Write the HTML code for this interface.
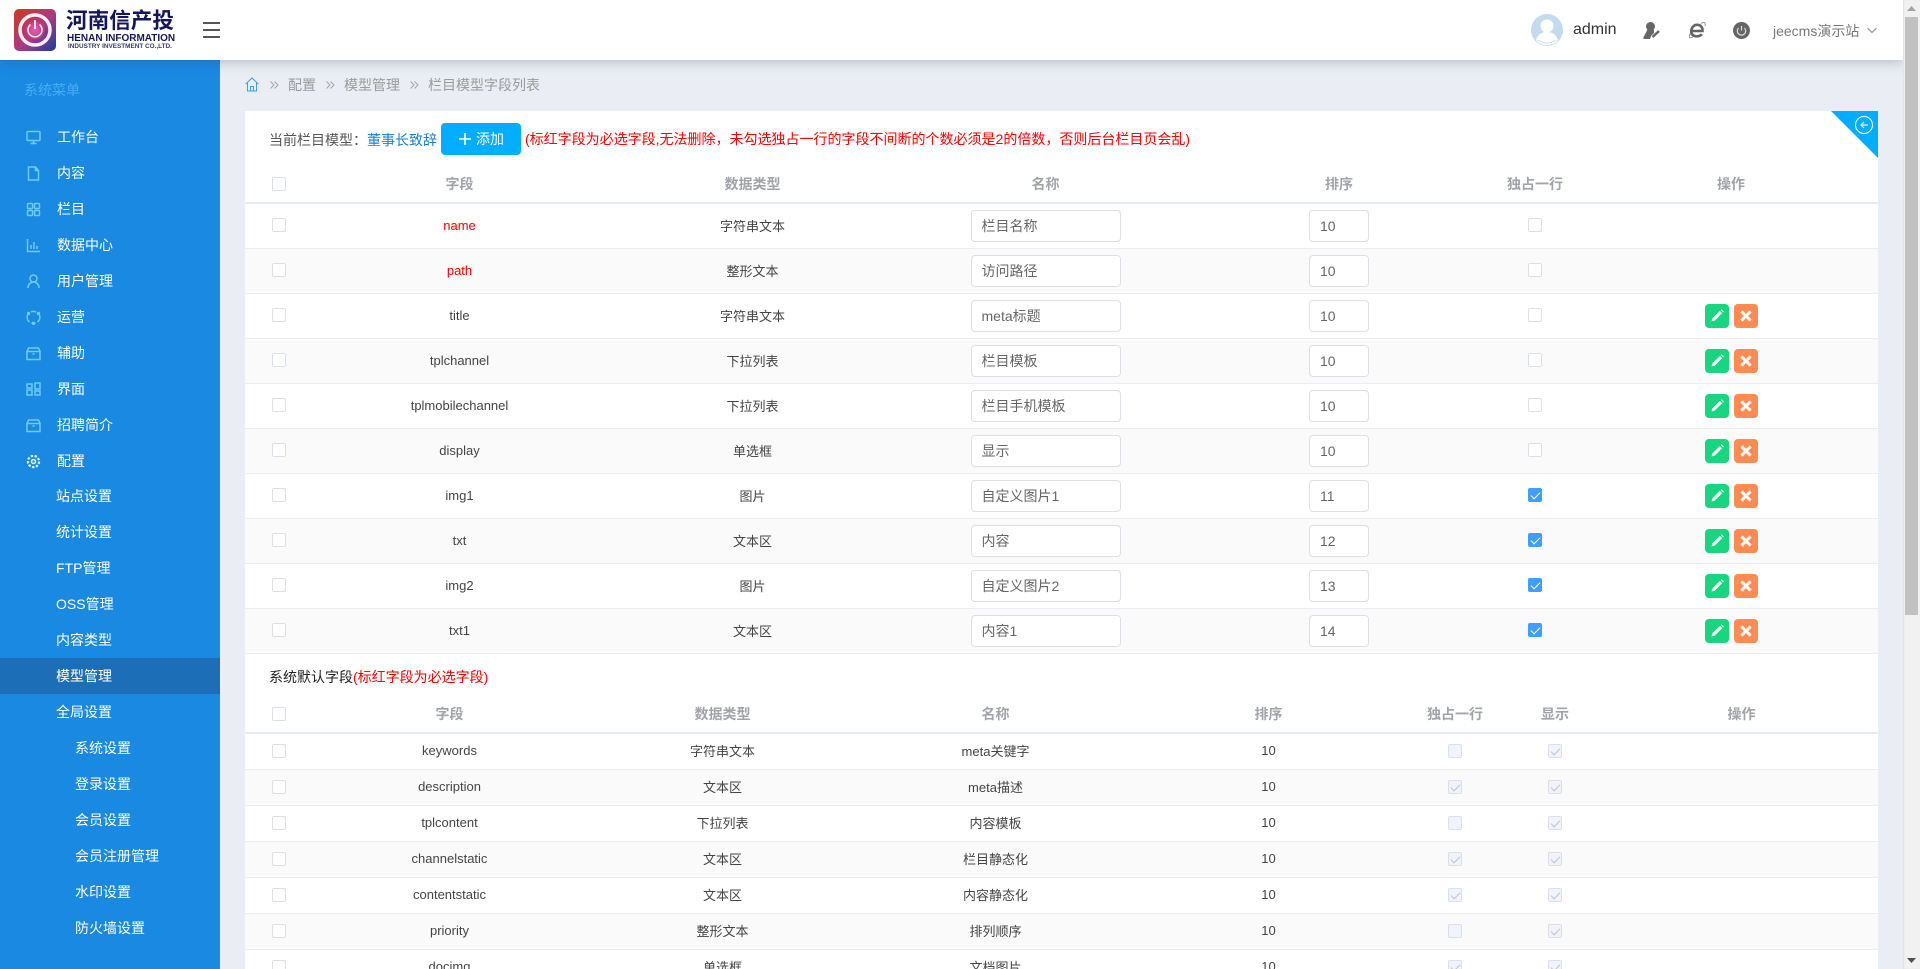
<!DOCTYPE html>
<html lang="zh-CN"><head><meta charset="utf-8"><title>栏目模型字段列表</title>
<style>
*{box-sizing:border-box}
html,body{margin:0;padding:0;width:1920px;height:969px;overflow:hidden;background:#eaedf3}
#wrap{position:relative;width:1920px;height:969px;overflow:hidden;background:#eaedf3;font-family:"Liberation Sans","Noto Sans CJK SC",sans-serif;color:#444}
.abs{position:absolute}
#top{position:absolute;left:0;top:0;width:1903px;height:60px;background:#fff;box-shadow:0 2px 11px rgba(60,70,90,.3);z-index:5}
#side{position:absolute;left:0;top:60px;width:220px;height:909px;background:#1989e2;z-index:4}
#side .it{position:absolute;left:0;width:220px;height:36px;line-height:36px;color:#fff;font-size:14px}
#side .it svg{position:absolute;left:26px;top:11px;width:15px;height:15px;fill:none;stroke:#6fcbfa;stroke-width:1.5}
#card{position:absolute;left:245px;top:111px;width:1633px;height:858px;background:#fff}
table{position:absolute;left:245px;border-collapse:separate;border-spacing:0;table-layout:fixed;font-size:13px;color:#444}
th{height:38px;font-size:14px;font-weight:700;color:#a0a3a8;text-align:center;padding:0;border-bottom:2px solid #e8ebf5}
td{padding:0 0 2px;text-align:center;border-bottom:1px solid #ebedf3;position:relative}
#t1 td{height:45px}#t2 td{height:36px}
tr.e td{background:#fafafa}
.c{display:inline-block;width:14px;height:14px;border:1px solid #dcdfe6;border-radius:2px;background:#fff;vertical-align:middle;position:relative;margin-top:-2px}
.c.on{background:#409eff;border-color:#409eff}
.c.on:after,.c.d:after{content:"";position:absolute;left:4px;top:1px;width:4px;height:8px;border:solid #fff;border-width:0 1px 1px 0;transform:rotate(45deg)}
.c.g{background:#f0f3fb}
.c.d{background:#f0f3fb}
.c.d:after{border-color:#bfc3cc}
.i{display:inline-block;height:32px;line-height:30px;border:1px solid #dcdfe6;border-radius:4px;background:#fff;color:#666;font-size:14px;text-align:left;padding-left:10px;vertical-align:middle;position:relative;top:1px}
.n{width:150px}.s{width:60px}
.b{display:inline-block;width:24px;height:24px;border-radius:4px;vertical-align:middle;position:relative;top:1px}
.b svg{position:absolute;left:4px;top:4px;width:16px;height:16px}
.gr{background:#18d67f;margin-right:5px}.or{background:#ff8a52}
.r{color:#f00}
.bc{position:absolute;top:76px;font-size:14px;line-height:18px;color:#9a9a9a;z-index:1}
.ch{position:absolute;top:81px;z-index:1}
</style></head><body><div id="wrap">

<div id="top">
<svg class="abs" style="left:14px;top:9px" width="42" height="42" viewBox="0 0 42 42"><defs><linearGradient id="lg" x1="0" y1="0" x2="1" y2="1"><stop offset="0" stop-color="#d03a18"/><stop offset=".55" stop-color="#a53a8a"/><stop offset="1" stop-color="#143f9e"/></linearGradient><radialGradient id="rg"><stop offset="0" stop-color="#e060c0"/><stop offset="1" stop-color="#c23a70"/></radialGradient></defs><rect width="42" height="42" rx="5" fill="url(#lg)"/><circle cx="21" cy="21" r="15" fill="none" stroke="#fbeef0" stroke-width="3.500"/><circle cx="21" cy="21" r="9.500" fill="url(#rg)"/><path d="M16.500 15.500a7 7 0 1 0 9 0" fill="none" stroke="#f8e8f0" stroke-width="1.500"/><rect x="20.200" y="11" width="1.600" height="9" fill="#fff"/></svg>
<div class="abs" style="left:66px;top:8px;font-size:21.6px;line-height:26px;font-weight:700;color:#15155c;white-space:nowrap">河南信产投</div>
<div class="abs" style="left:67px;top:33px;font-size:10px;line-height:11px;font-weight:700;color:#15155c;white-space:nowrap">HENAN INFORMATION</div>
<div class="abs" style="left:68px;top:43px;font-size:6.4px;line-height:8px;font-weight:700;color:#3a3a70;white-space:nowrap">INDUSTRY INVESTMENT CO.,LTD.</div>
<div class="abs" style="left:203px;top:22px;width:17px;height:2px;background:#555"></div>
<div class="abs" style="left:203px;top:29px;width:17px;height:2px;background:#555"></div>
<div class="abs" style="left:203px;top:36px;width:17px;height:2px;background:#555"></div>

<svg class="abs" style="left:1531px;top:14px" width="32" height="32" viewBox="0 0 32 32"><circle cx="16" cy="16" r="16" fill="#c3daef"/><circle cx="16" cy="12" r="6.500" fill="#fff"/><path d="M5 26c2-6 6-8 11-8s9 2 11 8c-3 4-7 5-11 5s-8-1-11-5z" fill="#fff"/><path d="M7 26c3 2 6 3 9 3s6-1 9-3" stroke="#c3daef" fill="none"/></svg>
<div class="abs" style="left:1573px;top:20px;font-size:16px;line-height:20px;color:#333">admin</div>
<svg class="abs" style="left:1642px;top:21px" width="20" height="19" viewBox="0 0 20 19"><circle cx="8.500" cy="5.500" r="4.500" fill="#666"/><path d="M5 9h7v3l-3 3-1 3H1.500C1 15 4 13 5 9z" fill="#666"/><path d="M10.500 16l6.500-6" stroke="#666" stroke-width="2.500"/></svg>
<svg class="abs" style="left:1688px;top:21px" width="18" height="18" viewBox="0 0 18 18"><path d="M3.800 10h10.700c.2-4-2-6.200-5.300-6.200S3.300 6.500 3.300 10.300s2.500 5 5.500 5c2.200 0 4-.8 5-2.200" fill="none" stroke="#666" stroke-width="2.600"/><path d="M2.500 12C.5 16 1 18 5 16M13 2.500c3-2 5-1.500 4 2.500" fill="none" stroke="#888" stroke-width=".9"/></svg>
<svg class="abs" style="left:1733px;top:22px" width="17" height="17" viewBox="0 0 17 17"><circle cx="8.500" cy="8.500" r="8.500" fill="#666"/><path d="M5.500 6a4.200 4.200 0 1 0 6 0" fill="none" stroke="#ddd" stroke-width="1.200"/><path d="M8.500 4v4.500" stroke="#ddd" stroke-width="1.200"/></svg>
<div class="abs" style="left:1773px;top:22px;font-size:14px;line-height:18px;color:#777;white-space:nowrap">jeecms演示站</div>
<svg class="abs" style="left:1867px;top:27px" width="10" height="7" viewBox="0 0 10 7"><path d="M.5 1L5 5.500 9.500 1" fill="none" stroke="#888"/></svg>
</div>

<div id="side">
<div class="abs" style="left:24px;top:21px;font-size:14px;line-height:18px;color:#48aef2">系统菜单</div>
<div class="it" style="top:59px;padding-left:57px"><svg viewBox="0 0 15 15"><rect x="1" y="1.500" width="13" height="9" rx="1"/><path d="M7.500 10.500v3M4.500 13.500h6"/></svg>工作台</div>
<div class="it" style="top:95px;padding-left:57px"><svg viewBox="0 0 15 15"><path d="M2.500 1h7l3 3.500V14h-10zM9.500 1v3.500h3"/></svg>内容</div>
<div class="it" style="top:131px;padding-left:57px"><svg viewBox="0 0 15 15"><rect x="1.500" y="1.500" width="5" height="5" rx=".8"/><rect x="8.500" y="1.500" width="5" height="5" rx=".8"/><rect x="1.500" y="8.500" width="5" height="5" rx=".8"/><rect x="8.500" y="8.500" width="5" height="5" rx=".8"/></svg>栏目</div>
<div class="it" style="top:167px;padding-left:57px"><svg viewBox="0 0 15 15"><path d="M1.500 1v12.500H14M5 11V7M8 11V4M11 11V8"/></svg>数据中心</div>
<div class="it" style="top:203px;padding-left:57px"><svg viewBox="0 0 15 15"><circle cx="7.500" cy="4.500" r="3.500"/><path d="M2 14c0-3.500 2.500-6 5.500-6s5.500 2.500 5.500 6"/></svg>用户管理</div>
<div class="it" style="top:239px;padding-left:57px"><svg viewBox="0 0 15 15"><path d="M3.500 2.500a6 6 0 0 0 0 9.500M11.500 2.500a6 6 0 0 1 0 9.500M5 2c1.500-.7 3.500-.7 5 0M5.500 13c1.200.4 2.800.4 4 0"/><circle cx="7.500" cy="13.300" r="1" fill="#6fcbfa"/><circle cx="12.500" cy="3.500" r="1" fill="#6fcbfa"/><circle cx="2.500" cy="3.500" r="1" fill="#6fcbfa"/></svg>运营</div>
<div class="it" style="top:275px;padding-left:57px"><svg viewBox="0 0 15 15"><path d="M1 5.500h13v8H1zM2.500 2h10L14 5.500H1zM6.500 8h2"/></svg>辅助</div>
<div class="it" style="top:311px;padding-left:57px"><svg viewBox="0 0 15 15"><rect x="1" y="2" width="5" height="4"/><rect x="9" y="1" width="5" height="6"/><rect x="1" y="8" width="5" height="5"/><rect x="9" y="9" width="5" height="4"/></svg>界面</div>
<div class="it" style="top:347px;padding-left:57px"><svg viewBox="0 0 15 15"><path d="M1 5.500h13v8H1zM2.500 2h10L14 5.500H1zM6.500 8h2"/></svg>招聘简介</div>
<div class="it" style="top:383px;padding-left:57px"><svg viewBox="0 0 15 15" style="stroke:#e4f5ff"><circle cx="7.500" cy="7.500" r="2"/><circle cx="7.500" cy="7.500" r="5.600" stroke-width="2.200" stroke-dasharray="2.400 1.500"/></svg>配置</div>
<div class="it" style="top:418px;padding-left:56px">站点设置</div>
<div class="it" style="top:454px;padding-left:56px">统计设置</div>
<div class="it" style="top:490px;padding-left:56px">FTP管理</div>
<div class="it" style="top:526px;padding-left:56px">OSS管理</div>
<div class="it" style="top:562px;padding-left:56px">内容类型</div>
<div class="it" style="top:598px;padding-left:56px;background:#1c6fb6">模型管理</div>
<div class="it" style="top:634px;padding-left:56px">全局设置</div>
<div class="it" style="top:670px;padding-left:75px">系统设置</div>
<div class="it" style="top:706px;padding-left:75px">登录设置</div>
<div class="it" style="top:742px;padding-left:75px">会员设置</div>
<div class="it" style="top:778px;padding-left:75px">会员注册管理</div>
<div class="it" style="top:814px;padding-left:75px">水印设置</div>
<div class="it" style="top:850px;padding-left:75px">防火墙设置</div>
</div>

<svg class="abs" style="left:245px;top:77px;z-index:1" width="14" height="15" viewBox="0 0 14 15"><path d="M.7 7L7 1l6.300 6M2.500 6v8h9V6M5.500 14V9.500h3V14" fill="none" stroke="#3a9fe6" stroke-width="1"/></svg>
<svg class="ch" style="left:270px" width="9" height="8" viewBox="0 0 9 8"><path d="M.5.500L4 4 .5 7.500M4.500.500L8 4 4.500 7.500" fill="none" stroke="#a5a5a5"/></svg><div class="bc" style="left:288px">配置</div>
<svg class="ch" style="left:326px" width="9" height="8" viewBox="0 0 9 8"><path d="M.5.500L4 4 .5 7.500M4.500.500L8 4 4.500 7.500" fill="none" stroke="#a5a5a5"/></svg><div class="bc" style="left:344px">模型管理</div>
<svg class="ch" style="left:410px" width="9" height="8" viewBox="0 0 9 8"><path d="M.5.500L4 4 .5 7.500M4.500.500L8 4 4.500 7.500" fill="none" stroke="#a5a5a5"/></svg><div class="bc" style="left:428px">栏目模型字段列表</div>

<div id="card"></div>
<div class="abs" style="left:269px;top:131px;font-size:14px;line-height:18px;color:#555">当前栏目模型：</div>
<div class="abs" style="left:367px;top:131px;font-size:14px;line-height:18px;color:#1a7fd0">董事长致辞</div>
<div class="abs" style="left:441px;top:123px;width:80px;height:32px;background:#00aeff;border-radius:4px;color:#fff;font-size:14px;line-height:32px;padding-left:35px">添加
<svg class="abs" style="left:17px;top:9px" width="14" height="14" viewBox="0 0 14 14"><path d="M7 1v12M1 7h12" stroke="#fff" stroke-width="1.600"/></svg></div>
<div class="abs r" style="left:525px;top:130px;font-size:14px;line-height:18px;white-space:nowrap">(标红字段为必选字段,无法删除，未勾选独占一行的字段不间断的个数必须是2的倍数，否则后台栏目页会乱)</div>
<svg class="abs" style="left:1831px;top:111px" width="47" height="47" viewBox="0 0 47 47"><path d="M0 0h47v47z" fill="#00aeff"/><circle cx="33" cy="14" r="8.500" fill="none" stroke="#fff" stroke-width="1.100"/><path d="M37 14h-7.500M33 11l-3 3 3 3" fill="none" stroke="#d6f1ff" stroke-width="1.300"/></svg>

<table id="t1" style="top:166px;width:1633px">
<colgroup><col style="width:68px"><col style="width:293px"><col style="width:293px"><col style="width:293px"><col style="width:294px"><col style="width:98px"><col style="width:294px"></colgroup>
<thead><tr><th><span class="c"></span></th><th>字段</th><th>数据类型</th><th>名称</th><th>排序</th><th>独占一行</th><th>操作</th></tr></thead>
<tbody>
<tr><td><span class="c"></span></td><td class="r">name</td><td>字符串文本</td><td><span class="i n">栏目名称</span></td><td><span class="i s">10</span></td><td><span class="c"></span></td><td></td></tr>
<tr class="e"><td><span class="c"></span></td><td class="r">path</td><td>整形文本</td><td><span class="i n">访问路径</span></td><td><span class="i s">10</span></td><td><span class="c"></span></td><td></td></tr>
<tr><td><span class="c"></span></td><td>title</td><td>字符串文本</td><td><span class="i n">meta标题</span></td><td><span class="i s">10</span></td><td><span class="c"></span></td><td><span class="b gr"><svg viewBox="0 0 14 14"><path d="M3 9l6.500-6.500 2 2L5 11l-2.800.8zM10.300 1.800l.7-.7 2 2-.7.7z" fill="#fff"/></svg></span><span class="b or"><svg viewBox="0 0 14 14"><path d="M3 3l8 8M11 3l-8 8" stroke="#fff" stroke-width="2.600"/></svg></span></td></tr>
<tr class="e"><td><span class="c"></span></td><td>tplchannel</td><td>下拉列表</td><td><span class="i n">栏目模板</span></td><td><span class="i s">10</span></td><td><span class="c"></span></td><td><span class="b gr"><svg viewBox="0 0 14 14"><path d="M3 9l6.500-6.500 2 2L5 11l-2.800.8zM10.300 1.800l.7-.7 2 2-.7.7z" fill="#fff"/></svg></span><span class="b or"><svg viewBox="0 0 14 14"><path d="M3 3l8 8M11 3l-8 8" stroke="#fff" stroke-width="2.600"/></svg></span></td></tr>
<tr><td><span class="c"></span></td><td>tplmobilechannel</td><td>下拉列表</td><td><span class="i n">栏目手机模板</span></td><td><span class="i s">10</span></td><td><span class="c"></span></td><td><span class="b gr"><svg viewBox="0 0 14 14"><path d="M3 9l6.500-6.500 2 2L5 11l-2.800.8zM10.300 1.800l.7-.7 2 2-.7.7z" fill="#fff"/></svg></span><span class="b or"><svg viewBox="0 0 14 14"><path d="M3 3l8 8M11 3l-8 8" stroke="#fff" stroke-width="2.600"/></svg></span></td></tr>
<tr class="e"><td><span class="c"></span></td><td>display</td><td>单选框</td><td><span class="i n">显示</span></td><td><span class="i s">10</span></td><td><span class="c"></span></td><td><span class="b gr"><svg viewBox="0 0 14 14"><path d="M3 9l6.500-6.500 2 2L5 11l-2.800.8zM10.300 1.800l.7-.7 2 2-.7.7z" fill="#fff"/></svg></span><span class="b or"><svg viewBox="0 0 14 14"><path d="M3 3l8 8M11 3l-8 8" stroke="#fff" stroke-width="2.600"/></svg></span></td></tr>
<tr><td><span class="c"></span></td><td>img1</td><td>图片</td><td><span class="i n">自定义图片1</span></td><td><span class="i s">11</span></td><td><span class="c on"></span></td><td><span class="b gr"><svg viewBox="0 0 14 14"><path d="M3 9l6.500-6.500 2 2L5 11l-2.800.8zM10.300 1.800l.7-.7 2 2-.7.7z" fill="#fff"/></svg></span><span class="b or"><svg viewBox="0 0 14 14"><path d="M3 3l8 8M11 3l-8 8" stroke="#fff" stroke-width="2.600"/></svg></span></td></tr>
<tr class="e"><td><span class="c"></span></td><td>txt</td><td>文本区</td><td><span class="i n">内容</span></td><td><span class="i s">12</span></td><td><span class="c on"></span></td><td><span class="b gr"><svg viewBox="0 0 14 14"><path d="M3 9l6.500-6.500 2 2L5 11l-2.800.8zM10.300 1.800l.7-.7 2 2-.7.7z" fill="#fff"/></svg></span><span class="b or"><svg viewBox="0 0 14 14"><path d="M3 3l8 8M11 3l-8 8" stroke="#fff" stroke-width="2.600"/></svg></span></td></tr>
<tr><td><span class="c"></span></td><td>img2</td><td>图片</td><td><span class="i n">自定义图片2</span></td><td><span class="i s">13</span></td><td><span class="c on"></span></td><td><span class="b gr"><svg viewBox="0 0 14 14"><path d="M3 9l6.500-6.500 2 2L5 11l-2.800.8zM10.300 1.800l.7-.7 2 2-.7.7z" fill="#fff"/></svg></span><span class="b or"><svg viewBox="0 0 14 14"><path d="M3 3l8 8M11 3l-8 8" stroke="#fff" stroke-width="2.600"/></svg></span></td></tr>
<tr class="e"><td><span class="c"></span></td><td>txt1</td><td>文本区</td><td><span class="i n">内容1</span></td><td><span class="i s">14</span></td><td><span class="c on"></span></td><td><span class="b gr"><svg viewBox="0 0 14 14"><path d="M3 9l6.500-6.500 2 2L5 11l-2.800.8zM10.300 1.800l.7-.7 2 2-.7.7z" fill="#fff"/></svg></span><span class="b or"><svg viewBox="0 0 14 14"><path d="M3 3l8 8M11 3l-8 8" stroke="#fff" stroke-width="2.600"/></svg></span></td></tr>
</tbody></table>

<div class="abs" style="left:269px;top:668px;font-size:14px;line-height:18px;color:#222;white-space:nowrap">系统默认字段<span class="r">(标红字段为必选字段)</span></div>

<table id="t2" style="top:696px;width:1633px">
<colgroup><col style="width:68px"><col style="width:273px"><col style="width:273px"><col style="width:273px"><col style="width:273px"><col style="width:100px"><col style="width:100px"><col style="width:273px"></colgroup>
<thead><tr><th><span class="c"></span></th><th>字段</th><th>数据类型</th><th>名称</th><th>排序</th><th>独占一行</th><th>显示</th><th>操作</th></tr></thead>
<tbody>
<tr><td><span class="c"></span></td><td>keywords</td><td>字符串文本</td><td>meta关键字</td><td>10</td><td><span class="c g"></span></td><td><span class="c d"></span></td><td></td></tr>
<tr class="e"><td><span class="c"></span></td><td>description</td><td>文本区</td><td>meta描述</td><td>10</td><td><span class="c d"></span></td><td><span class="c d"></span></td><td></td></tr>
<tr><td><span class="c"></span></td><td>tplcontent</td><td>下拉列表</td><td>内容模板</td><td>10</td><td><span class="c g"></span></td><td><span class="c d"></span></td><td></td></tr>
<tr class="e"><td><span class="c"></span></td><td>channelstatic</td><td>文本区</td><td>栏目静态化</td><td>10</td><td><span class="c d"></span></td><td><span class="c d"></span></td><td></td></tr>
<tr><td><span class="c"></span></td><td>contentstatic</td><td>文本区</td><td>内容静态化</td><td>10</td><td><span class="c d"></span></td><td><span class="c d"></span></td><td></td></tr>
<tr class="e"><td><span class="c"></span></td><td>priority</td><td>整形文本</td><td>排列顺序</td><td>10</td><td><span class="c g"></span></td><td><span class="c d"></span></td><td></td></tr>
<tr><td><span class="c"></span></td><td>docimg</td><td>单选框</td><td>文档图片</td><td>10</td><td><span class="c d"></span></td><td><span class="c d"></span></td><td></td></tr>
</tbody></table>

<div class="abs" style="left:1903px;top:0;width:17px;height:969px;background:#f1f1f1;box-shadow:inset 1px 0 1px #dfe2e6;z-index:6">
<div class="abs" style="left:2px;top:17px;width:13px;height:598px;background:#c1c1c1"></div>
<svg class="abs" style="left:4px;top:6px" width="9" height="5"><path d="M0 5h9L4.500 0z" fill="#a3a3a3"/></svg>
<svg class="abs" style="left:4px;top:958px" width="9" height="5"><path d="M0 0h9L4.500 5z" fill="#505050"/></svg>
</div>
</div></body></html>
